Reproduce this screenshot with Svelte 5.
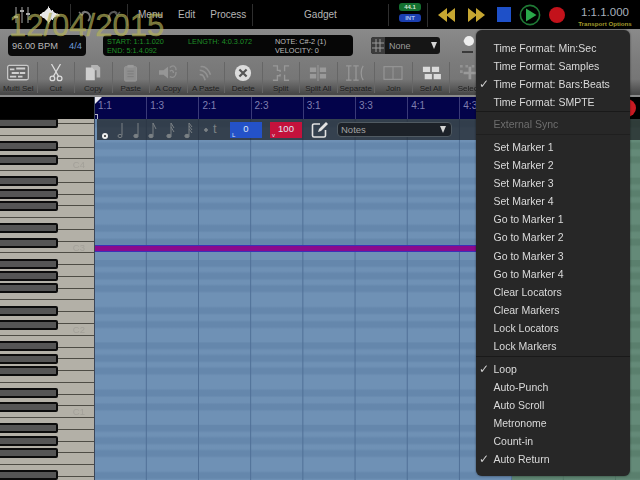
<script>
	const tools = [
		{ id: 'multi', label: 'Multi Sel' },
		{ id: 'cut', label: 'Cut' },
		{ id: 'copy', label: 'Copy' },
		{ id: 'paste', label: 'Paste' },
		{ id: 'acopy', label: 'A Copy' },
		{ id: 'apaste', label: 'A Paste' },
		{ id: 'delete', label: 'Delete' },
		{ id: 'split', label: 'Split' },
		{ id: 'splitall', label: 'Split All' },
		{ id: 'separate', label: 'Separate' },
		{ id: 'join', label: 'Join' },
		{ id: 'selall', label: 'Sel All' },
		{ id: 'select', label: 'Select' }
	];

	// the last ones sit behind the popover, so they have no visible label
	const bars = ['1:1', '1:3', '2:1', '2:3', '3:1', '3:3', '4:1', '4:3', '', ''];

	const waveform = [2, 3, 5, 6, 7, 9, 11, 13, 17, 14, 11, 9, 10, 7, 5, 4, 3, 3, 2, 1];

	// one row per white key, top to bottom; rows 1 and 4 of each 7 have no black key
	const names = { 4: 'C4', 11: 'C3', 18: 'C2', 25: 'C1' };
	const keys = Array.from({ length: 32 }, (_, i) => ({
		black: i % 7 !== 1 && i % 7 !== 4,
		up: i % 7 === 2 || i % 7 === 5,
		down: i % 7 === 3,
		name: names[i]
	}));

	const timeFormats = [
		{ text: 'Time Format: Min:Sec' },
		{ text: 'Time Format: Samples' },
		{ text: 'Time Format: Bars:Beats', on: true },
		{ text: 'Time Format: SMPTE' }
	];
	const markers = [
		'Set Marker 1', 'Set Marker 2', 'Set Marker 3', 'Set Marker 4',
		'Go to Marker 1', 'Go to Marker 2', 'Go to Marker 3', 'Go to Marker 4',
		'Clear Locators', 'Clear Markers', 'Lock Locators', 'Lock Markers'
	].map((text) => ({ text }));
	const options = [
		{ text: 'Loop', on: true },
		{ text: 'Auto-Punch' },
		{ text: 'Auto Scroll' },
		{ text: 'Metronome' },
		{ text: 'Count-in' },
		{ text: 'Auto Return', on: true }
	];
</script>

{#snippet items(list)}
	{#each list as item}
		<li class="item">
			{#if item.on}<span class="check">✓</span>{/if}
			{item.text}
		</li>
	{/each}
{/snippet}

<div class="app">
	<!-- Top bar -->
	<header class="topbar">
		<div class="cell meters">
			<svg width="18" height="18" viewBox="0 0 18 18" fill="none" stroke="#a8a8a8" stroke-width="1">
				<path d="M3 1v16M9 1v16M15 1v16" />
				<path d="M1 11h4M7 5h4M13 8h4" stroke-width="2" />
			</svg>
			<svg width="21" height="18" viewBox="0 0 21 18" stroke="#e8e8e8" stroke-width="1">
				{#each waveform as h, i}
					<path d="M{i + 0.5} {9 - h / 2}v{h}" />
				{/each}
			</svg>
		</div>
		<div class="cell history">
			<svg width="16" height="16" viewBox="0 0 16 16" fill="none" stroke="#777" stroke-width="2">
				<path d="M4 6a5 5 0 1 1 6 8" />
				<path d="M1 5l3 3 3-4" stroke-width="1.5" />
			</svg>
			<svg width="16" height="16" viewBox="0 0 16 16" fill="none" stroke="#585858" stroke-width="2">
				<path d="M12 6a5 5 0 1 0-6 8" />
				<path d="M15 5l-3 3-3-4" stroke-width="1.5" />
			</svg>
		</div>
		<nav class="cell nav">
			<span>Menu</span>
			<span>Edit</span>
			<span>Process</span>
		</nav>
		<div class="cell song">Gadget</div>
		<div class="cell rate">
			<span class="badge green">44.1</span>
			<span class="badge blue">INT</span>
		</div>
		<div class="transport">
			<svg width="17" height="14" viewBox="0 0 17 14" fill="#c6a631">
				<path d="M9 0v14L0 7zM17 0v14L8 7z" />
			</svg>
			<svg class="forward" width="17" height="14" viewBox="0 0 17 14" fill="#c6a631">
				<path d="M0 0v14l9-7zM8 0v14l9-7z" />
			</svg>
			<span class="stop"></span>
			<svg class="play" width="22" height="22" viewBox="0 0 22 22">
				<circle cx="11" cy="11" r="9.6" fill="none" stroke="#1f7a35" stroke-width="1.6" />
				<path d="M7 4.5L17.5 11 7 17.5z" fill="#2aa84a" />
			</svg>
			<span class="record"></span>
		</div>
		<div class="clock">
			<span class="time">1:1.1.000</span>
			<span class="options">Transport Options</span>
		</div>
	</header>

	<!-- Grey panel -->
	<section class="panel">
		<div class="info">
			<div class="tempo"><span>96.00 BPM</span><span class="meter">4/4</span></div>
			<div class="readout">
				<div class="col range"><span>START: 1:1.1.020</span><span>END: 5:1.4.092</span></div>
				<div class="col length"><span>LENGTH: 4:0.3.072</span></div>
				<div class="col note"><span>NOTE: C#-2 (1)</span><span>VELOCITY: 0</span></div>
			</div>
			<div class="snap">
				<span class="snap-icon">
					<svg width="12" height="13" viewBox="0 0 12 13" fill="none" stroke="#999" stroke-width="1">
						<path d="M4 0v13M8 0v13M0 4h12M0 9h12" />
					</svg>
				</span>
				<span class="snap-value">None</span>
				<span class="arrow"></span>
			</div>
			<div class="zoomer">
				<span class="knob"></span>
				<span class="tick"></span>
			</div>
		</div>
		<div class="toolrow">
			{#each tools as tool}
				<div class="tool">
					<svg width="26" height="20" viewBox="0 0 26 20" fill="#cfcfcf" stroke="none">
						{#if tool.id === 'multi'}
							<rect x="1.5" y="1.5" width="23" height="16" rx="2" fill="#666" stroke="#c8c8c8" stroke-width="1.4" />
							<path d="M4 5h5v2H4zM11 4h10v2H11zM6 9h8v2H6zM15 9h6v2h-6zM4 13h7v2H4zM13 13h5v2h-5z" />
						{:else if tool.id === 'cut'}
							<g fill="none" stroke="#dcdcdc" stroke-width="1.4">
								<path d="M8 0l8 14M18 0l-8 14" />
								<circle cx="9" cy="16" r="2.6" />
								<circle cx="17" cy="16" r="2.6" />
							</g>
						{:else if tool.id === 'copy'}
							<path d="M11 1h7l3 3v11h-4V7h-6z" fill="#b4b4b4" />
							<path d="M5 4h7l3 3v11H5z" fill="#cecece" />
						{:else if tool.id === 'paste'}
							<rect x="6" y="3" width="13" height="16" rx="1" fill="#8e8e8e" stroke="#9a9a9a" />
							<rect x="9" y="1" width="7" height="3" fill="#9a9a9a" />
							<path d="M9 8h7M9 11h7M9 14h7" stroke="#7c7c7c" stroke-width="1" />
						{:else if tool.id === 'acopy'}
							<path d="M3 7h5l5-4v13l-5-4H3z" fill="#969696" />
							<path d="M15 4c4-4 7-1 7 3M15 8c3-2 4 0 4 2M15 14c4 2 7 0 7-5" fill="none" stroke="#929292" stroke-width="1.5" />
						{:else if tool.id === 'apaste'}
							<path d="M7 3c5-1 9 4 11 9M6 7c4 0 8 3 9 8M6 12c3-1 5 2 6 6" fill="none" stroke="#929292" stroke-width="1.8" />
						{:else if tool.id === 'delete'}
							<circle cx="13" cy="10" r="9" fill="#dcdcdc" />
							<path d="M9 6l8 8M17 6l-8 8" stroke="#555" stroke-width="2.4" />
						{:else if tool.id === 'split'}
							<path d="M4 2h5v5h3v2M4 18h5v-5h3v-2M22 2h-5v6M22 18h-5v-6" fill="none" stroke="#989898" stroke-width="1.5" />
						{:else if tool.id === 'splitall'}
							<path d="M13 1v18" stroke="#989898" stroke-width="1.2" />
							<path d="M4 4h7v5H4zM15 4h7v5h-7zM4 11h7v5H4zM15 11h7v5h-7z" fill="#9a9a9a" />
						{:else if tool.id === 'separate'}
							<path d="M5 2v16M2 2h6M2 18h6M13 2v16M10 2h6M10 18h6M21 2c-3 4-3 12 0 16" fill="none" stroke="#989898" stroke-width="1.4" />
						{:else if tool.id === 'join'}
							<rect x="3" y="3" width="20" height="14" fill="none" stroke="#989898" stroke-width="1.2" />
							<path d="M13 3v14" stroke="#989898" stroke-width="1" />
						{:else if tool.id === 'selall'}
							<path d="M4 3h8v6H4zM14 3h8v6h-8zM6 11h8v6H6zM16 11h8v6h-8z" fill="#dadada" />
						{:else}
							<path d="M14 3v14M7 10h14" stroke="#9a9a9a" stroke-width="3" />
							<path d="M3 1h3v3H3zM3 7h3v3H3zM9 1h3v3H9zM16 1h3v3h-3z" fill="#929292" />
						{/if}
					</svg>
					<span class="tool-label">{tool.label}</span>
				</div>
			{/each}
		</div>
	</section>

	<!-- Editor -->
	<main class="editor">
		<div class="keys">
			<div class="corner"></div>
			<div class="piano">
				{#each keys as key}
					<div class="white">
						{#if key.name}<span class="octave">{key.name}</span>{/if}
						{#if key.black}<span class="black" class:up={key.up} class:down={key.down}></span>{/if}
					</div>
				{/each}
			</div>
		</div>

		<div class="arrange">
			<div class="ruler">
				{#each bars as bar}
					<span class="bar">{bar}</span>
				{/each}
				<svg class="flag" width="7" height="7" viewBox="0 0 7 7"><path d="M0 0h7L0 7z" fill="#e8e8f0" /></svg>
				<span class="loop-end"></span>
			</div>
			<div class="roll">
				<div class="lane blue"></div>
				<div class="lane teal"></div>
				<div class="midi"></div>
				<div class="notebar">
					<svg class="lengths" width="130" height="20" viewBox="0 0 130 20">
						<circle cx="6" cy="16" r="3" fill="#eee" />
						<circle cx="6" cy="16" r="1" fill="#222" />
						<g fill="#7a8084" stroke="#7a8084">
							<ellipse cx="21" cy="16" rx="2" ry="1.6" fill="none" />
							<path d="M23 15V3" />
							<ellipse cx="37" cy="16" rx="2.2" ry="1.7" />
							<path d="M39 15V3" />
							<ellipse cx="52" cy="16" rx="2.2" ry="1.7" />
							<path d="M54 15V3l3 6" fill="none" />
							<ellipse cx="70" cy="16" rx="2.2" ry="1.7" />
							<path d="M72 15V3l3 5M72 7l3 5" fill="none" />
							<ellipse cx="88" cy="16" rx="2.2" ry="1.7" />
							<path d="M90 15V3l3 4M90 6l3 4M90 9l3 4" fill="none" />
							<circle cx="107" cy="10" r="1.4" />
						</g>
					</svg>
					<span class="tee">t</span>
					<span class="chip pitch">0<i>L</i></span>
					<span class="chip velocity">100<i>v</i></span>
					<svg class="edit" width="18" height="18" viewBox="0 0 18 18" fill="none" stroke="#e2e2e2" stroke-width="1.6">
						<path d="M9 3H3a1.5 1.5 0 0 0-1.5 1.5v10A1.5 1.5 0 0 0 3 16h10a1.5 1.5 0 0 0 1.5-1.5V9" />
						<path d="M7 11l1-3 7-7 2 2-7 7z" fill="#e2e2e2" stroke="none" />
					</svg>
					<div class="lane-select">
						<span>Notes</span>
						<span class="arrow"></span>
					</div>
				</div>
			</div>
		</div>
	</main>

	<span class="closer"></span>
	<div class="date">12/04/2015</div>

	<!-- Transport options popover -->
	<aside class="menu">
		<ul>{@render items(timeFormats)}</ul>
		<ul class="bordered">
			<li class="item dim">External Sync</li>
		</ul>
		<ul class="bordered faint">{@render items(markers)}</ul>
		<ul class="bordered">{@render items(options)}</ul>
	</aside>
</div>

<style>
	:global(body) {
		margin: 0;
		background: #000;
	}

	.app {
		position: relative;
		width: 640px;
		height: 480px;
		overflow: hidden;
		display: flex;
		flex-direction: column;
		font-family: "Liberation Sans", Arial, sans-serif;
		filter: blur(0.35px);
	}

	/* ── Top bar ───────────────────────────── */
	.topbar {
		height: 29px;
		flex: none;
		display: flex;
		align-items: center;
		background: #000;
		color: #b6b6b6;
	}

	.cell {
		height: 22px;
		box-sizing: border-box;
		border-right: 1px solid #2e2e2e;
		display: flex;
		align-items: center;
		flex: none;
	}

	.meters { width: 71px; padding-left: 13px; gap: 9px; }
	.history { width: 57px; padding-left: 7px; gap: 11px; }
	.nav { width: 125px; padding-left: 10px; gap: 15px; font-size: 10px; }
	.song { width: 136px; justify-content: center; font-size: 10px; }
	.rate { width: 39px; flex-direction: column; gap: 3px; align-items: flex-start; padding-left: 10px; height: 24px; }

	.badge {
		width: 22px;
		height: 8px;
		border-radius: 3px;
		font-size: 6px;
		font-weight: bold;
		line-height: 8px;
		text-align: center;
		color: #d6e6d6;
	}
	.badge.green { background: #13702f; }
	.badge.blue { background: #1b3fb0; color: #a9c0f0; }

	.transport {
		display: flex;
		align-items: center;
		padding-left: 10px;
		width: 149px;
		flex: none;
		box-sizing: border-box;
	}
	.forward { margin-left: 13px; }
	.stop {
		width: 14px;
		height: 15px;
		margin-left: 12px;
		background: #1e50c8;
	}
	.play { margin-left: 8px; }
	.record {
		width: 16px;
		height: 16px;
		margin-left: 8px;
		border-radius: 50%;
		background: #c3121b;
	}

	.clock {
		display: flex;
		flex-direction: column;
		align-items: center;
		width: 56px;
		margin-top: 3px;
		gap: 2px;
	}
	.time { font-size: 11.5px; color: #a6b0bd; white-space: nowrap; }
	.options { font-size: 6.2px; font-weight: bold; color: #a09a2a; white-space: nowrap; }

	/* ── Grey panel ────────────────────────── */
	.panel {
		height: 68px;
		flex: none;
		box-sizing: border-box;
		padding-top: 6px;
		background: linear-gradient(#8a8a8a, #7c7c7c 47%, #767676 76%, #484848 98%);
		border-bottom: 2px solid #8a8a8a;
	}

	.info {
		display: flex;
		align-items: center;
		height: 21px;
		padding-left: 8px;
	}

	.tempo {
		width: 78px;
		height: 21px;
		box-sizing: border-box;
		padding-left: 4px;
		display: flex;
		align-items: center;
		gap: 11px;
		background: #0a0a0a;
		border-radius: 4px;
		font-size: 9.3px;
		color: #b8b8b8;
	}
	.meter { color: #6f9bdc; }

	.readout {
		width: 250px;
		height: 21px;
		margin-left: 17px;
		box-sizing: border-box;
		padding: 2px 0 0 4px;
		display: flex;
		background: #060606;
		border-radius: 4px;
		font-size: 7.3px;
		line-height: 9px;
	}
	.col { display: flex; flex-direction: column; white-space: nowrap; }
	.range, .length { color: #1f8f27; }
	.range { width: 81px; }
	.length { width: 87px; }
	.note { color: #bdbdbd; }

	.snap {
		display: flex;
		align-items: center;
		margin-left: 18px;
		width: 69px;
		height: 17px;
		border-radius: 3px;
		background: #151515;
		color: #9c9c9c;
		font-size: 9px;
	}
	.snap-icon {
		width: 14px;
		height: 17px;
		display: flex;
		align-items: center;
		justify-content: center;
		background: #3c3c3c;
		border-radius: 3px 0 0 3px;
	}
	.snap-value { margin-left: 4px; flex: 1; }
	.arrow {
		width: 0;
		height: 0;
		margin-right: 3px;
		border-left: 3.5px solid transparent;
		border-right: 3.5px solid transparent;
		border-top: 7px solid #d4d4d4;
	}

	.zoomer {
		width: 30px;
		margin-left: 20px;
		display: flex;
		flex-direction: column;
		align-items: flex-start;
		gap: 5px;
		padding-left: 2px;
		margin-top: -2px;
	}
	.knob {
		width: 10px;
		height: 10px;
		margin-left: 2px;
		border-radius: 50%;
		background: #eee;
		box-shadow: -4px 0 0 -3.5px #ddd;
	}
	.tick { width: 11px; height: 2px; background: #3a3a3a; }

	.toolrow {
		display: flex;
		margin-top: 6px;
	}
	.tool {
		width: 37.5px;
		height: 31px;
		flex: none;
		box-sizing: border-box;
		border-right: 1px solid #666;
		display: flex;
		flex-direction: column;
		align-items: center;
		padding-top: 2px;
	}
	.tool:last-child { border-right: none; }
	.tool-label {
		margin-top: 2px;
		font-size: 8px;
		color: #1e1e1e;
		white-space: nowrap;
		text-shadow: 0 1px 0 rgba(255, 255, 255, 0.08);
	}

	/* ── Editor ────────────────────────────── */
	.editor {
		flex: 1;
		min-height: 0;
		display: flex;
	}

	.keys {
		width: 94px;
		flex: none;
		display: flex;
		flex-direction: column;
		overflow: hidden;
		background: #b3b0a7;
	}
	.corner {
		height: 22px;
		flex: none;
		background: #000;
		position: relative;
		z-index: 2;
	}
	.piano {
		flex: 1;
		display: flex;
		flex-direction: column;
		margin-top: -6.8px;
	}
	.white {
		position: relative;
		height: 11.78px;
		flex: none;
		box-sizing: border-box;
		border-bottom: 1px solid #4e4c45;
	}
	.black {
		position: absolute;
		left: -4px;
		width: 62px;
		bottom: -5.5px;
		height: 10px;
		box-sizing: border-box;
		background: #555;
		border: 2px solid #0c0c0c;
		border-radius: 0 2px 2px 0;
		z-index: 1;
	}
	.black.up { bottom: -4.5px; }
	.black.down { bottom: -7px; }
	.octave {
		position: absolute;
		right: 9px;
		top: 1px;
		font-size: 9.5px;
		line-height: 10px;
		color: #a3a099;
	}

	.arrange {
		flex: 1;
		min-width: 0;
		display: flex;
		flex-direction: column;
		border-left: 1.5px solid #3c4658;
	}

	.ruler {
		position: relative;
		height: 22px;
		flex: none;
		display: flex;
		background: #000;
	}
	.bar {
		width: 52.2px;
		flex: none;
		box-sizing: border-box;
		padding: 3px 0 0 3px;
		border-right: 1px solid #3a3a78;
		background: #03034a;
		font-size: 10px;
		color: #7f7fb0;
	}
	.flag {
		position: absolute;
		left: 0;
		top: 0;
	}
	.loop-end {
		position: absolute;
		left: 0;
		bottom: 0;
		width: 3px;
		height: 5px;
		border-top: 1px solid #b8b8c8;
		border-right: 1px solid #b8b8c8;
		box-sizing: border-box;
	}

	.roll {
		position: relative;
		flex: 1;
		display: flex;
		min-height: 0;
	}
	.lane {
		height: 100%;
		background-color: var(--light);
		background-image:
			linear-gradient(to right, var(--line) 1px, transparent 1px),
			linear-gradient(
				var(--dark) 1px 5.8px, transparent 8px 11px,
				var(--dark) 13.6px 18.4px, transparent 20.6px 24px,
				var(--dark) 26.2px 31px, transparent 33.2px 46px,
				var(--dark) 48.2px 53px, transparent 55.2px 60px,
				var(--dark) 62.2px 67px, transparent 69.2px
			);
		background-size: 52.2px 100%, 100% 82.4px;
		background-position: 50.8px 0, 0 58.6px;
	}
	.lane.blue {
		--light: #6f91b5;
		--dark: #6587ac;
		--line: #4f6f96;
		width: 417px;
		flex: none;
	}
	.lane.teal {
		--light: #648a78;
		--dark: #5a7f6d;
		--line: #527666;
		flex: 1;
	}

	.midi {
		position: absolute;
		left: 0;
		width: 390px;
		top: 126px;
		height: 7px;
		background: #8a0a8c;
		border-top: 1px solid #3c30b8;
		border-bottom: 1px solid #3c30b8;
		box-sizing: border-box;
	}

	.notebar {
		position: absolute;
		left: 2px;
		right: 0;
		top: 0;
		height: 21px;
		display: flex;
		align-items: center;
		background: rgba(28, 32, 36, 0.7);
	}
	.lengths { flex: none; margin-left: 2px; }
	.tee {
		position: absolute;
		left: 116px;
		top: 2px;
		font-size: 13px;
		color: #7a8084;
	}
	.chip {
		position: absolute;
		top: 3px;
		height: 16px;
		width: 32px;
		text-align: center;
		font-size: 9.5px;
		line-height: 14px;
		color: #dfe6f4;
	}
	.chip i {
		position: absolute;
		left: 2px;
		bottom: -1px;
		font-style: normal;
		font-size: 6px;
		line-height: 8px;
	}
	.chip.pitch { left: 133px; background: #2452c8; }
	.chip.velocity { left: 173px; background: #c4123c; }
	.edit { position: absolute; left: 214px; top: 2px; }

	.lane-select {
		position: absolute;
		left: 240px;
		top: 3px;
		width: 115px;
		height: 15px;
		box-sizing: border-box;
		padding: 0 2px 0 3px;
		display: flex;
		align-items: center;
		justify-content: space-between;
		background: #1c2128;
		border: 1px solid #505a62;
		border-radius: 4px;
		font-size: 9.5px;
		color: #a2a2a2;
	}

	.closer {
		position: absolute;
		left: 618px;
		top: 99px;
		width: 18px;
		height: 18px;
		border-radius: 50%;
		background: #c81a22;
	}

	.date {
		position: absolute;
		left: 9px;
		top: 13px;
		font-size: 31px;
		line-height: 26px;
		color: rgba(180, 178, 90, 0.68);
		-webkit-text-stroke: 0.4px rgba(180, 178, 90, 0.68);
		white-space: nowrap;
		pointer-events: none;
	}

	/* ── Popover ───────────────────────────── */
	.menu {
		position: absolute;
		left: 476px;
		top: 30px;
		width: 154px;
		height: 446px;
		box-sizing: border-box;
		padding-top: 9px;
		background: #272727;
		border-radius: 6px;
		box-shadow: 0 0 2px rgba(0, 0, 0, 0.6);
		font-size: 10.5px;
		color: #dadada;
	}
	.menu ul {
		list-style: none;
		margin: 0;
		padding: 0;
	}
	.menu .bordered {
		border-top: 1px solid #191919;
		padding: 3px 0 1px;
	}
	.menu .bordered.faint { border-top-color: #1f1f1f; }
	.item {
		position: relative;
		height: 18.05px;
		line-height: 18px;
		padding-left: 17.5px;
		white-space: nowrap;
	}
	.item.dim { color: #6e6e6e; }
	.check {
		position: absolute;
		left: 3px;
		top: 0;
		font-family: "DejaVu Sans", sans-serif;
		font-size: 12px;
		color: #cfcfcf;
	}
</style>
